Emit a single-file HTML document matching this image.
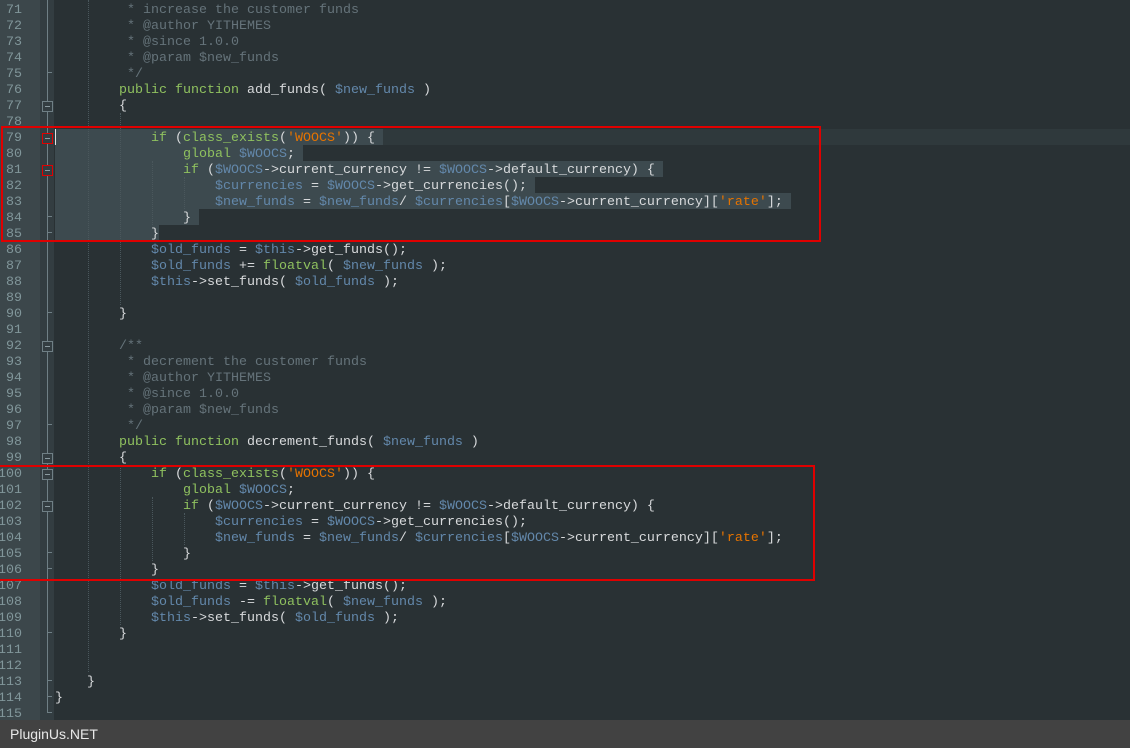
<!DOCTYPE html>
<html><head><meta charset="utf-8"><style>
body{margin:0;width:1130px;height:748px;background:#293134;overflow:hidden;position:relative;font-family:"Liberation Mono",monospace;font-size:13.33px}
.g1{position:absolute;left:0;top:0;width:40px;height:720px;background:#3c474b}
.g2{position:absolute;left:40px;top:0;width:14px;height:720px;background:#333d41}
.ln{position:absolute;left:-20px;width:42px;text-align:right;color:#81969a;height:16px;line-height:16px;margin-top:2px}
.l{position:absolute;height:16px;line-height:16px;white-space:pre;color:#d8dadc;margin-top:2px}
.sel{position:absolute;left:55px;height:16px;background:#3d4a4f}
.k{color:#8fc15f}.v{color:#6388ab}.s{color:#e57300}.c{color:#65737a}
.fl{position:absolute;left:47px;width:1px;background:#6f7f85}
.fb{position:absolute;left:42px;width:9px;height:9px;border:1px solid #6f7f85;background:#333d41}
.fb:after{content:"";position:absolute;left:2px;top:4px;width:5px;height:1px;background:#8a9aa0}
.tk{position:absolute;left:47px;width:5px;height:1px;background:#6f7f85}
.ig{position:absolute;width:0;border-left:1px dotted #4a575c}
.red{position:absolute;border:2px solid #e00000}
.bar{position:absolute;left:0;top:720px;width:1130px;height:28px;background:#424242;color:#e8e8e8;font-family:"Liberation Sans",sans-serif;font-size:14px;line-height:28px;padding-left:10px;box-sizing:border-box}
</style></head><body>
<div class="g1"></div><div class="g2"></div>
<div style="position:absolute;left:54px;top:129px;width:1076px;height:16px;background:#2f393c"></div>
<div class="sel" style="top:129px;width:328px"></div>
<div class="sel" style="top:145px;width:248px"></div>
<div class="sel" style="top:161px;width:608px"></div>
<div class="sel" style="top:177px;width:480px"></div>
<div class="sel" style="top:193px;width:736px"></div>
<div class="sel" style="top:209px;width:144px"></div>
<div class="sel" style="top:225px;width:104px"></div>
<div class="ig" style="left:88px;top:0;height:672px"></div>
<div class="ig" style="left:120px;top:113px;height:192px"></div>
<div class="ig" style="left:120px;top:465px;height:160px"></div>
<div class="ig" style="left:152px;top:161px;height:64px"></div>
<div class="ig" style="left:184px;top:177px;height:32px"></div>
<div class="ig" style="left:152px;top:497px;height:64px"></div>
<div class="ig" style="left:184px;top:513px;height:32px"></div>
<div style="position:absolute;left:55px;top:129px;width:1px;height:16px;background:#e0e2e4"></div>
<div class="fl" style="top:0;height:712px"></div>
<div class="tk" style="top:72px"></div><div class="tk" style="top:216px"></div><div class="tk" style="top:232px"></div>
<div class="tk" style="top:312px"></div><div class="tk" style="top:424px"></div><div class="tk" style="top:552px"></div>
<div class="tk" style="top:568px"></div><div class="tk" style="top:632px"></div><div class="tk" style="top:680px"></div>
<div class="tk" style="top:696px"></div><div class="tk" style="top:712px"></div>
<div class="fb" style="top:101px"></div>
<div class="fb" style="top:341px"></div><div class="fb" style="top:453px"></div><div class="fb" style="top:469px"></div><div class="fb" style="top:501px"></div>
<div class="fb" style="top:133px;border-color:#e00000"></div>
<div class="fb" style="top:165px;border-color:#e00000"></div>
<div class="ln" style="top:1px">71</div><div class="ln" style="top:17px">72</div><div class="ln" style="top:33px">73</div><div class="ln" style="top:49px">74</div><div class="ln" style="top:65px">75</div><div class="ln" style="top:81px">76</div><div class="ln" style="top:97px">77</div><div class="ln" style="top:113px">78</div><div class="ln" style="top:129px">79</div><div class="ln" style="top:145px">80</div><div class="ln" style="top:161px">81</div><div class="ln" style="top:177px">82</div><div class="ln" style="top:193px">83</div><div class="ln" style="top:209px">84</div><div class="ln" style="top:225px">85</div><div class="ln" style="top:241px">86</div><div class="ln" style="top:257px">87</div><div class="ln" style="top:273px">88</div><div class="ln" style="top:289px">89</div><div class="ln" style="top:305px">90</div><div class="ln" style="top:321px">91</div><div class="ln" style="top:337px">92</div><div class="ln" style="top:353px">93</div><div class="ln" style="top:369px">94</div><div class="ln" style="top:385px">95</div><div class="ln" style="top:401px">96</div><div class="ln" style="top:417px">97</div><div class="ln" style="top:433px">98</div><div class="ln" style="top:449px">99</div><div class="ln" style="top:465px">100</div><div class="ln" style="top:481px">101</div><div class="ln" style="top:497px">102</div><div class="ln" style="top:513px">103</div><div class="ln" style="top:529px">104</div><div class="ln" style="top:545px">105</div><div class="ln" style="top:561px">106</div><div class="ln" style="top:577px">107</div><div class="ln" style="top:593px">108</div><div class="ln" style="top:609px">109</div><div class="ln" style="top:625px">110</div><div class="ln" style="top:641px">111</div><div class="ln" style="top:657px">112</div><div class="ln" style="top:673px">113</div><div class="ln" style="top:689px">114</div><div class="ln" style="top:705px">115</div>
<div class="l c" style="left:127px;top:1px">* increase the customer funds</div>
<div class="l c" style="left:127px;top:17px">* @author YITHEMES</div>
<div class="l c" style="left:127px;top:33px">* @since 1.0.0</div>
<div class="l c" style="left:127px;top:49px">* @param $new_funds</div>
<div class="l c" style="left:127px;top:65px">*/</div>
<div class="l" style="left:119px;top:81px"><span class="k">public function</span> add_funds( <span class="v">$new_funds</span> )</div>
<div class="l" style="left:119px;top:97px">{</div>
<div class="l" style="left:151px;top:129px"><span class="k">if</span> (<span class="k">class_exists</span>(<span class="s">'WOOCS'</span>)) {</div>
<div class="l" style="left:183px;top:145px"><span class="k">global</span> <span class="v">$WOOCS</span>;</div>
<div class="l" style="left:183px;top:161px"><span class="k">if</span> (<span class="v">$WOOCS</span>-&gt;current_currency != <span class="v">$WOOCS</span>-&gt;default_currency) {</div>
<div class="l" style="left:215px;top:177px"><span class="v">$currencies</span> = <span class="v">$WOOCS</span>-&gt;get_currencies();</div>
<div class="l" style="left:215px;top:193px"><span class="v">$new_funds</span> = <span class="v">$new_funds</span>/ <span class="v">$currencies</span>[<span class="v">$WOOCS</span>-&gt;current_currency][<span class="s">'rate'</span>];</div>
<div class="l" style="left:183px;top:209px">}</div>
<div class="l" style="left:151px;top:225px">}</div>
<div class="l" style="left:151px;top:241px"><span class="v">$old_funds</span> = <span class="v">$this</span>-&gt;get_funds();</div>
<div class="l" style="left:151px;top:257px"><span class="v">$old_funds</span> += <span class="k">floatval</span>( <span class="v">$new_funds</span> );</div>
<div class="l" style="left:151px;top:273px"><span class="v">$this</span>-&gt;set_funds( <span class="v">$old_funds</span> );</div>
<div class="l" style="left:119px;top:305px">}</div>
<div class="l c" style="left:119px;top:337px">/**</div>
<div class="l c" style="left:127px;top:353px">* decrement the customer funds</div>
<div class="l c" style="left:127px;top:369px">* @author YITHEMES</div>
<div class="l c" style="left:127px;top:385px">* @since 1.0.0</div>
<div class="l c" style="left:127px;top:401px">* @param $new_funds</div>
<div class="l c" style="left:127px;top:417px">*/</div>
<div class="l" style="left:119px;top:433px"><span class="k">public function</span> decrement_funds( <span class="v">$new_funds</span> )</div>
<div class="l" style="left:119px;top:449px">{</div>
<div class="l" style="left:151px;top:465px"><span class="k">if</span> (<span class="k">class_exists</span>(<span class="s">'WOOCS'</span>)) {</div>
<div class="l" style="left:183px;top:481px"><span class="k">global</span> <span class="v">$WOOCS</span>;</div>
<div class="l" style="left:183px;top:497px"><span class="k">if</span> (<span class="v">$WOOCS</span>-&gt;current_currency != <span class="v">$WOOCS</span>-&gt;default_currency) {</div>
<div class="l" style="left:215px;top:513px"><span class="v">$currencies</span> = <span class="v">$WOOCS</span>-&gt;get_currencies();</div>
<div class="l" style="left:215px;top:529px"><span class="v">$new_funds</span> = <span class="v">$new_funds</span>/ <span class="v">$currencies</span>[<span class="v">$WOOCS</span>-&gt;current_currency][<span class="s">'rate'</span>];</div>
<div class="l" style="left:183px;top:545px">}</div>
<div class="l" style="left:151px;top:561px">}</div>
<div class="l" style="left:151px;top:577px"><span class="v">$old_funds</span> = <span class="v">$this</span>-&gt;get_funds();</div>
<div class="l" style="left:151px;top:593px"><span class="v">$old_funds</span> -= <span class="k">floatval</span>( <span class="v">$new_funds</span> );</div>
<div class="l" style="left:151px;top:609px"><span class="v">$this</span>-&gt;set_funds( <span class="v">$old_funds</span> );</div>
<div class="l" style="left:119px;top:625px">}</div>
<div class="l" style="left:87px;top:673px">}</div>
<div class="l" style="left:55px;top:689px">}</div>
<div class="red" style="left:1px;top:126px;width:816px;height:112px"></div>
<div class="red" style="left:-2px;top:465px;width:813px;height:112px"></div>
<div class="bar">PluginUs.NET</div>
</body></html>
